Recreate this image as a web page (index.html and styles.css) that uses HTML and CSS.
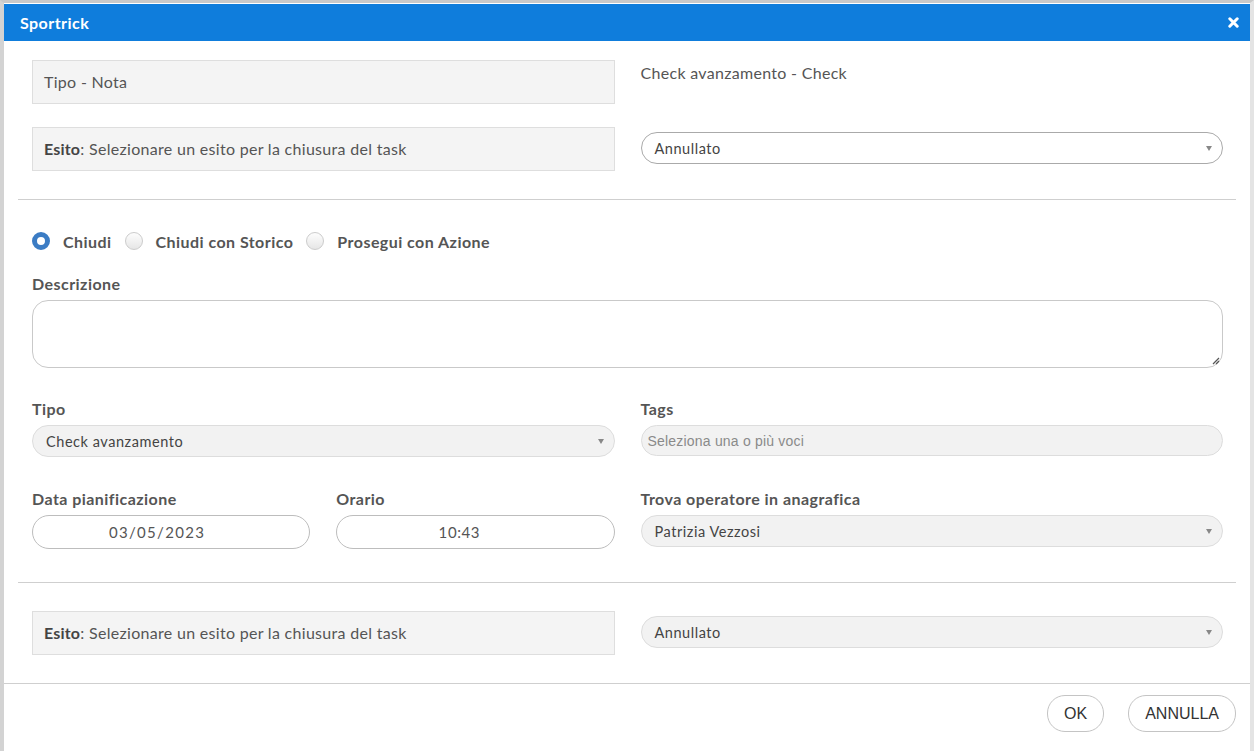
FILE: index.html
```html
<!DOCTYPE html>
<html lang="it">
<head>
<meta charset="utf-8">
<title>Sportrick</title>
<link rel="stylesheet" href="styles.css">
</head>
<body>
<div class="dialog">
  <div class="titlebar">
    <span class="title">Sportrick</span>
    <span class="close" aria-label="chiudi">
      <svg width="11" height="11" viewBox="0 0 11 11"><path d="M1.8 1.8 L9.2 9.2 M9.2 1.8 L1.8 9.2" stroke="#fff" stroke-width="3" stroke-linecap="round"/></svg>
    </span>
  </div>
  <div class="content">
    <div class="row grid2 r-first">
      <div class="infobox">Tipo - Nota</div>
      <div class="plain">Check avanzamento - Check</div>
    </div>
    <div class="row grid2 r-second">
      <div class="infobox"><b>Esito</b>: Selezionare un esito per la chiusura del task</div>
      <div class="cell-center">
        <div class="select white"><span>Annullato</span><i class="caret"></i></div>
      </div>
    </div>
    <hr class="sep">
    <div class="row radios">
      <label class="radio"><span class="dot checked"></span>Chiudi</label>
      <label class="radio"><span class="dot"></span>Chiudi con Storico</label>
      <label class="radio"><span class="dot"></span>Prosegui con Azione</label>
    </div>
    <div class="row field desc">
      <div class="label">Descrizione</div>
      <div class="textarea"><svg class="grip" width="9" height="9" viewBox="0 0 9 9"><path d="M8 2 L2 8 M8 5 L5 8" stroke="#555" stroke-width="1.2"/></svg></div>
    </div>
    <div class="row grid2 r-tipo">
      <div class="field">
        <div class="label">Tipo</div>
        <div class="select grey"><span>Check avanzamento</span><i class="caret"></i></div>
      </div>
      <div class="field">
        <div class="label">Tags</div>
        <div class="tags">Seleziona una o più voci</div>
      </div>
    </div>
    <div class="row grid2 r-data">
      <div class="grid2">
        <div class="field">
          <div class="label">Data pianificazione</div>
          <div class="dateinput">03/05/2023</div>
        </div>
        <div class="field">
          <div class="label">Orario</div>
          <div class="dateinput time">10:43</div>
        </div>
      </div>
      <div class="field">
        <div class="label">Trova operatore in anagrafica</div>
        <div class="select grey"><span>Patrizia Vezzosi</span><i class="caret"></i></div>
      </div>
    </div>
    <hr class="sep sep2">
    <div class="row grid2 r-esito2">
      <div class="infobox"><b>Esito</b>: Selezionare un esito per la chiusura del task</div>
      <div class="cell-center">
        <div class="select grey"><span>Annullato</span><i class="caret"></i></div>
      </div>
    </div>
  </div>
  <div class="footer">
    <button class="btn">OK</button>
    <button class="btn">ANNULLA</button>
  </div>
</div>
</body>
</html>
```
FILE: styles.css
```css
* { box-sizing: border-box; }
html, body { margin: 0; padding: 0; background: #fff; }
body { font-family: "Lato", "Open Sans", sans-serif; color: #555; }

.dialog {
  width: 1254px;
  height: 751px;
  border-top: 3px solid #c9c9c9;
  border-left: 4px solid #d3d3d3;
  border-right: 4px solid #e4e4e4;
  background: #fff;
}
.titlebar {
  height: 37px;
  margin-top: 1px;
  background: #0f7ddc;
  display: flex;
  align-items: center;
  justify-content: space-between;
  padding: 0 7px 0 16px;
}
.title { color: #fff; font-weight: 700; font-size: 16px; letter-spacing: 0.45px; }
.close { display: flex; width: 20px; height: 20px; align-items: center; justify-content: center; }

.content { padding: 0 14px; }
.row { padding: 0 13px 0 14px; }
.grid2 { display: grid; grid-template-columns: 1fr 1fr; column-gap: 26px; }
.r-first { margin-top: 19px; }
.r-second { margin-top: 23px; }

.infobox {
  height: 44px;
  background: #f4f4f4;
  border: 1px solid #dedede;
  display: flex;
  align-items: center;
  padding: 0 11px 2px;
  font-size: 16px;
  letter-spacing: 0.3px;
  color: #555;
}
.infobox b { color: #444; font-weight: 700; letter-spacing: 0.2px; }
.plain { font-size: 16px; letter-spacing: 0.3px; color: #555; padding-top: 3px; }
.cell-center { display: flex; align-items: flex-start; padding-top: 5px; }

.select {
  position: relative;
  width: 100%;
  height: 32px;
  border-radius: 16px;
  display: flex;
  align-items: center;
  padding: 0 13px;
  font-size: 14.5px;
  letter-spacing: 0.55px;
  color: #444;
}
.select.white { background: #fff; border: 1px solid #aaa; }
.select.grey { background: #f2f2f2; border: 1px solid #ddd; }
.caret {
  position: absolute;
  right: 10px;
  top: 13px;
  width: 0; height: 0;
  border-left: 3.5px solid transparent;
  border-right: 3.5px solid transparent;
  border-top: 5px solid #888;
}

.sep { border: 0; border-top: 1px solid #cfcfcf; margin: 28px 0 0; height: 0; }
.sep2 { margin-top: 33px; }

.radios { display: flex; align-items: center; gap: 13px; margin-top: 31px; height: 20px; }
.radio { display: flex; align-items: center; gap: 13px; font-weight: 700; font-size: 16px; letter-spacing: 0.45px; color: #555; }
.dot {
  width: 18px; height: 18px; border-radius: 50%;
  border: 1px solid #ccc;
  background: linear-gradient(#fdfdfd, #e6e6e6);
  display: inline-block;
}
.dot.checked {
  background: #fff;
  border: 5px solid #3b7cc4;
}

.field .label { font-weight: 700; font-size: 16px; letter-spacing: 0.45px; color: #555; line-height: 20px; margin-bottom: 6px; }
.desc { margin-top: 23px; }
.textarea {
  position: relative;
  height: 68px;
  border: 1px solid #c9c9c9;
  border-radius: 16px;
  background: #fff;
}
.grip { position: absolute; right: 2px; bottom: 2px; }

.r-tipo { margin-top: 31px; }
.tags {
  height: 31px;
  background: #f2f2f2;
  border: 1px solid #ddd;
  border-radius: 16px;
  display: flex;
  align-items: center;
  padding: 0 6px;
  font-family: "Liberation Sans", Arial, sans-serif;
  font-size: 14px;
  letter-spacing: 0.2px;
  color: #8a8a8a;
}

.r-data { margin-top: 32px; }
.dateinput {
  height: 34px;
  border: 1px solid #bdbdbd;
  border-radius: 17px;
  display: flex;
  align-items: center;
  justify-content: center;
  padding-right: 28px;
  font-size: 15px;
  color: #555;
  letter-spacing: 1.3px;
  background: #fff;
}
.dateinput.time { letter-spacing: 0.6px; padding-right: 32px; }

.r-esito2 { margin-top: 28px; }

.footer {
  margin-top: 28px;
  border-top: 1px solid #cfcfcf;
  display: flex;
  justify-content: flex-end;
  gap: 24px;
  padding: 11px 14px 0 0;
}
.btn {
  height: 37px;
  border: 1px solid #c4c4c4;
  border-radius: 18px;
  background: #fff;
  font-family: "Liberation Sans", Arial, sans-serif;
  font-size: 16px;
  color: #333;
  padding: 0 16px;
}
```
